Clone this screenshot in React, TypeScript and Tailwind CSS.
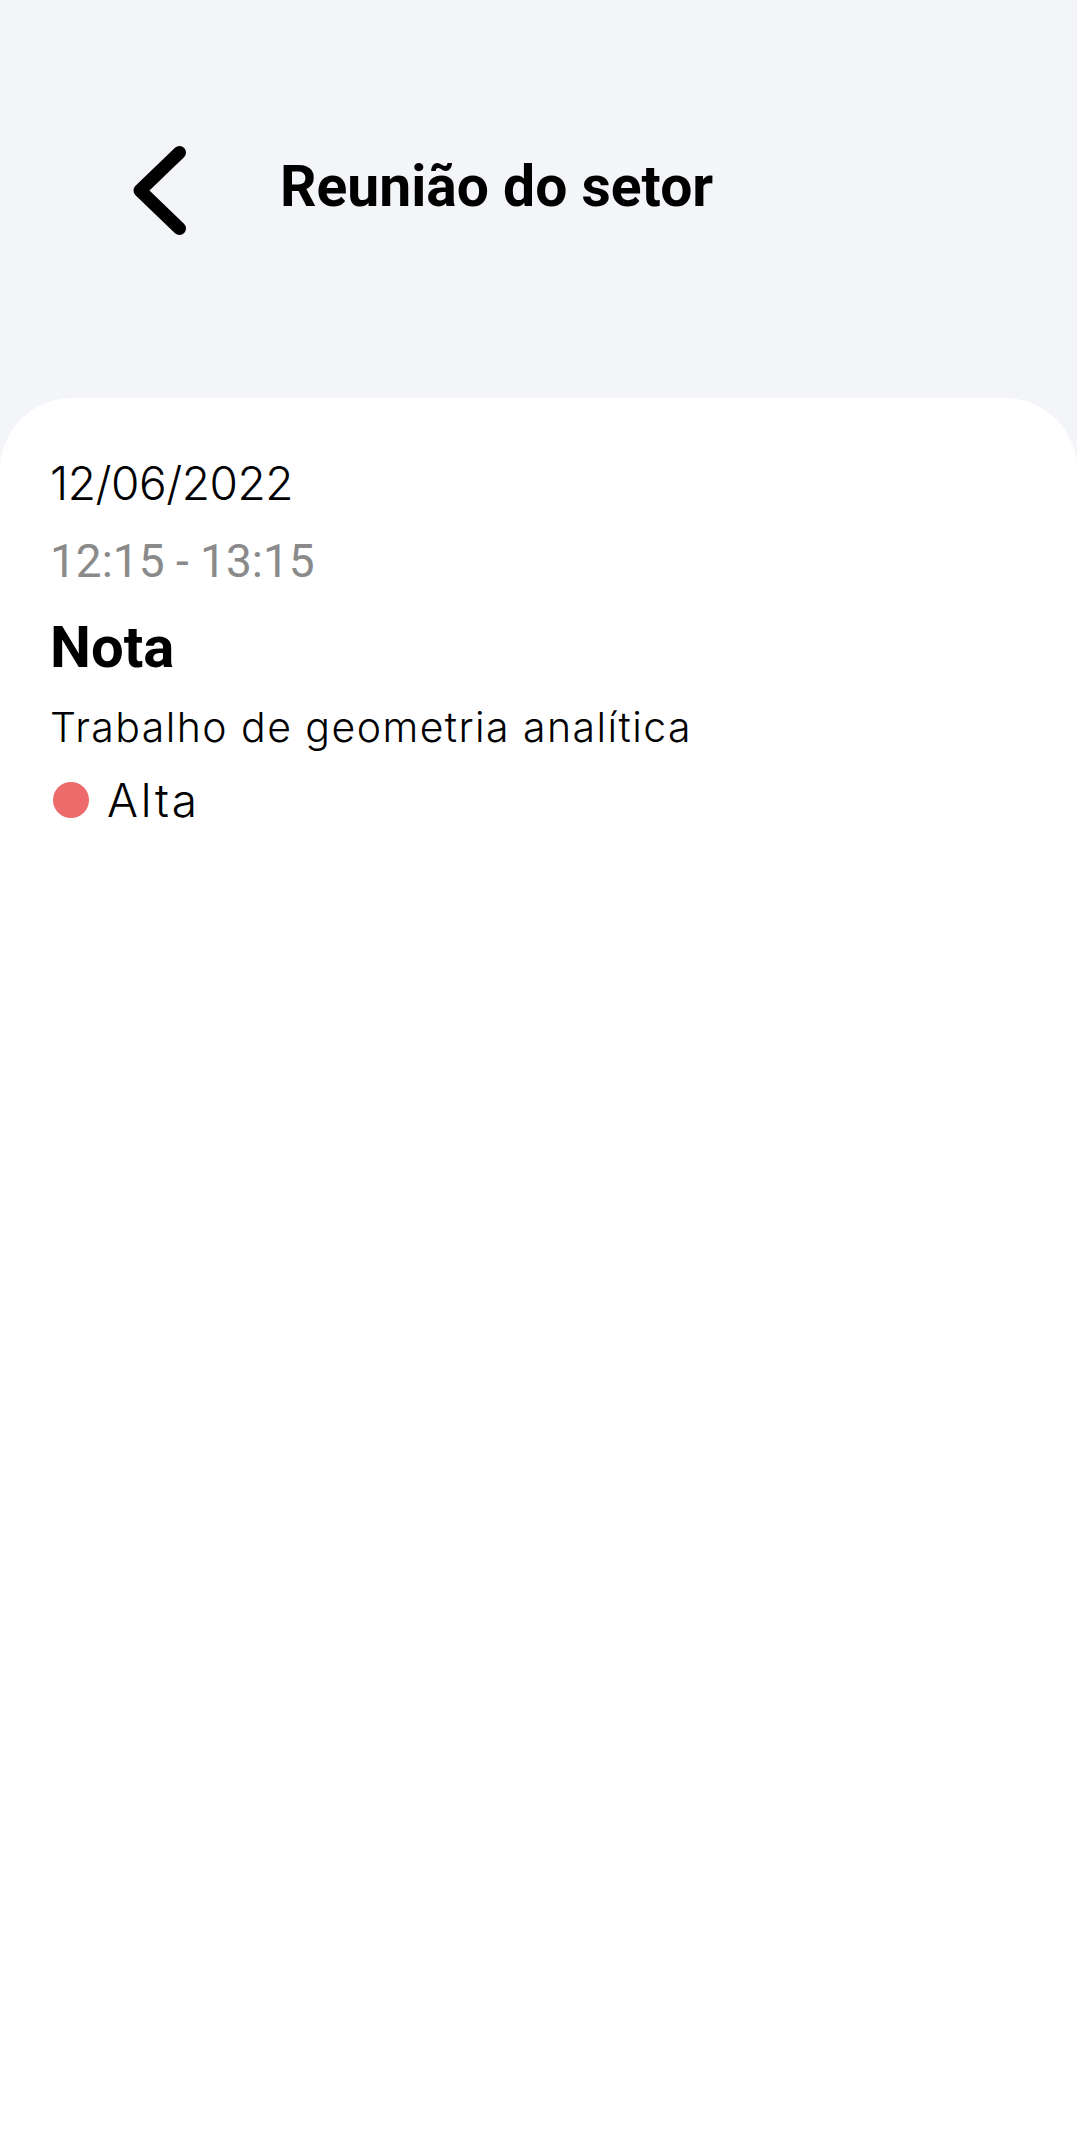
import React from "react";

export default function App() {
  return (
    <div className="min-h-screen w-full flex flex-col bg-[#f4f5f9]">
      <header className="h-[398px] shrink-0 flex items-start pt-[146px] pl-[133px]">
        <div className="flex items-center">
          <button className="w-[53px] h-[89px] flex items-center justify-center" aria-label="Voltar">
            <svg width="53" height="89" viewBox="0 0 53 89" fill="none">
              <path
                d="M46.5 6.5 L7 44.5 L46.5 82.5"
                stroke="#000"
                strokeWidth="13"
                strokeLinecap="round"
                strokeLinejoin="round"
              />
            </svg>
          </button>
          <h1 className="ml-[94px] -mt-[8px] text-[57px] leading-[64px] font-bold text-black font-['Roboto',sans-serif]">
            Reunião do setor
          </h1>
        </div>
      </header>
      <main className="flex-1 bg-white rounded-t-[72px] pt-[57px] pl-[50px] pr-[50px]">
        <p className="text-[46px] leading-[56px] font-light text-black font-['Inter',sans-serif] tracking-[-0.01em]">
          12/06/2022
        </p>
        <p className="mt-[24px] text-[46px] leading-[53px] text-[#8a8a8a] font-['Roboto',sans-serif]">
          12:15 - 13:15
        </p>
        <h2 className="mt-[27px] text-[58px] leading-[64px] font-bold text-black font-['Roboto',sans-serif]">
          Nota
        </h2>
        <p className="mt-[23px] text-[41px] leading-[50px] font-light text-black font-['Inter',sans-serif] tracking-[0.035em]">
          Trabalho de geometria analítica
        </p>
        <div className="mt-[22px] flex items-center">
          <span className="ml-[3px] w-[36px] h-[36px] rounded-full bg-[#ee6b6b] shrink-0" />
          <span className="ml-[18px] text-[46px] leading-[52px] font-light text-black font-['Inter',sans-serif] tracking-[0.06em]">
            Alta
          </span>
        </div>
      </main>
    </div>
  );
}
